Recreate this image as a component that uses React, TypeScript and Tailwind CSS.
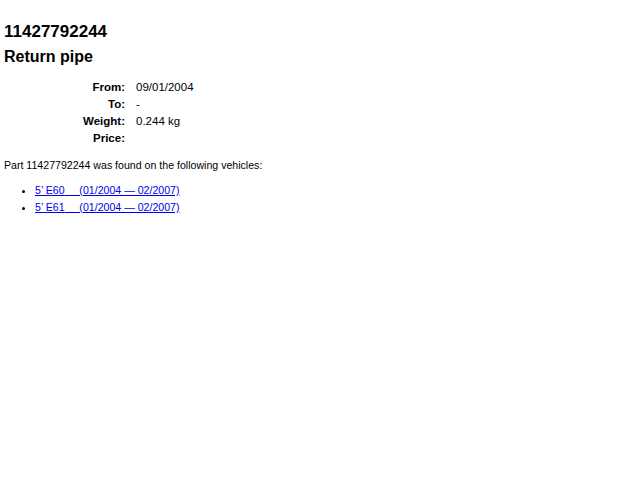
import React from 'react';

const rows: [string, string][] = [
  ['From:', '09/01/2004'],
  ['To:', '-'],
  ['Weight:', '0.244 kg'],
  ['Price:', ''],
];

const vehicles = ['5\u2019 E60', '5\u2019 E61'];

export default function App() {
  return (
    <div className="min-h-screen bg-white px-1 pt-[22px] text-black font-['Liberation_Sans',Arial,sans-serif]">
      <h1 className="text-[17px] font-bold leading-5">11427792244</h1>
      <h2 className="mt-[5px] text-[16px] font-bold leading-5">Return pipe</h2>

      <table className="mt-[12px] text-[11.5px] leading-[17px]">
        <tbody>
          {rows.map(([label, value]) => (
            <tr key={label}>
              <th className="w-[132px] pr-[11px] text-right font-bold">{label}</th>
              <td>{value}</td>
            </tr>
          ))}
        </tbody>
      </table>

      <p className="mt-[10px] text-[10.6px] leading-[17px]">
        Part 11427792244 was found on the following vehicles:
      </p>

      <ul className="mt-[8px] list-disc pl-[31px] text-[10.6px] leading-[17px]">
        {vehicles.map((v) => (
          <li key={v}>
            <a href="#" className="text-[#0000ee] underline">
              {v}&nbsp;&nbsp;&nbsp;&nbsp;&nbsp;(01/2004 &mdash; 02/2007)
            </a>
          </li>
        ))}
      </ul>
    </div>
  );
}
